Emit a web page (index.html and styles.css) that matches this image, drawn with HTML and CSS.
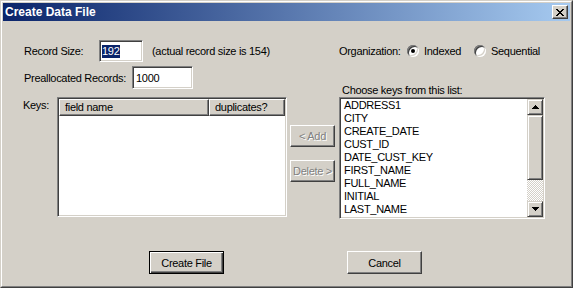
FILE: index.html
```html
<!DOCTYPE html>
<html lang="en">
<head>
<meta charset="UTF-8">
<meta name="viewport" content="width=device-width, initial-scale=1.0">
<title>Create Data File</title>
<link rel="stylesheet" href="styles.css">
</head>
<body>
<div class="window">
  <div class="window-inner">
    <div class="titlebar">
      <span class="title">Create Data File</span>
      <button type="button" class="close-btn">
        <svg width="8" height="7" viewBox="0 0 8 7" shape-rendering="crispEdges">
          <path fill="#000" d="M0 0h2v1h-2z M6 0h2v1h-2z M1 1h2v1h-2z M5 1h2v1h-2z M2 2h4v1h-4z M3 3h2v1h-2z M2 4h4v1h-4z M1 5h2v1h-2z M5 5h2v1h-2z M0 6h2v1h-2z M6 6h2v1h-2z"/>
        </svg>
      </button>
    </div>

    <div class="client">
      <div class="row-top">
        <div class="left-part">
          <span class="lbl lbl-size">Record Size:</span>
          <div class="field field-size"><span class="sel">192</span></div>
          <span class="note">(actual record size is 154)</span>
        </div>
        <div class="org">
          <span class="lbl lbl-org">Organization:</span>
          <span class="radio checked"></span><span class="radio-text first">Indexed</span>
          <span class="radio"></span><span class="radio-text">Sequential</span>
        </div>
      </div>

      <div class="main">
        <div class="left-col">
          <div class="row-prealloc">
            <span class="lbl lbl-prealloc">Preallocated Records:</span>
            <div class="field field-prealloc">1000</div>
          </div>
          <div class="keys-row">
            <span class="lbl lbl-keys">Keys:</span>
            <div class="listview">
              <div class="lv-header">
                <div class="lv-col col-name">field name</div>
                <div class="lv-col col-dup">duplicates?</div>
              </div>
            </div>
            <div class="move-btns">
              <button type="button" class="btn disabled btn-add">&lt; Add</button>
              <button type="button" class="btn disabled btn-del">Delete &gt;</button>
            </div>
          </div>
        </div>

        <div class="right-col">
          <div class="caption">Choose keys from this list:</div>
          <div class="listbox">
            <ul class="items">
              <li>ADDRESS1</li>
              <li>CITY</li>
              <li>CREATE_DATE</li>
              <li>CUST_ID</li>
              <li>DATE_CUST_KEY</li>
              <li>FIRST_NAME</li>
              <li>FULL_NAME</li>
              <li>INITIAL</li>
              <li>LAST_NAME</li>
              <li>REF_CODE</li>
            </ul>
            <div class="scrollbar">
              <div class="sb-btn">
                <svg width="7" height="4" viewBox="0 0 7 4" shape-rendering="crispEdges"><path d="M3 0h1v1h1v1h1v1h1v1h-7v-1h1v-1h1v-1h1z"/></svg>
              </div>
              <div class="sb-thumb"></div>
              <div class="sb-track"></div>
              <div class="sb-btn">
                <svg width="7" height="4" viewBox="0 0 7 4" shape-rendering="crispEdges"><path d="M0 0h7v1h-1v1h-1v1h-1v1h-1v-1h-1v-1h-1v-1h-1z"/></svg>
              </div>
            </div>
          </div>
        </div>
      </div>

      <div class="actions">
        <button type="button" class="btn big default">Create File</button>
        <button type="button" class="btn big">Cancel</button>
      </div>
    </div>
  </div>
</div>
</body>
</html>
```

FILE: styles.css
```css
body {
  margin: 0;
  font-family: "Liberation Sans", Arial, sans-serif;
  font-size: 11px;
  letter-spacing: -0.3px;
  color: #000;
  background-color: #D4D0C8;
}

/* window frame */
.window {
  width: 573px;
  height: 288px;
  box-sizing: border-box;
  border: 1px solid;
  border-color: #D4D0C8 #404040 #404040 #D4D0C8;
}

.window-inner {
  height: 100%;
  box-sizing: border-box;
  border: 1px solid;
  border-color: #fff #808080 #808080 #fff;
  padding: 1px;
}

.titlebar {
  height: 18px;
  display: flex;
  align-items: center;
  padding-left: 2px;
  background: linear-gradient(to right, #0A246A, #A6CAF0);
}

.title {
  color: white;
  font-weight: bold;
  font-size: 12px;
  letter-spacing: normal;
}

.close-btn {
  margin-left: auto;
  margin-right: 2px;
  width: 16px;
  height: 14px;
  padding: 0;
  box-sizing: border-box;
  display: flex;
  align-items: center;
  justify-content: center;
  background-color: #D4D0C8;
  border: 1px solid;
  border-color: #fff #404040 #404040 #fff;
  box-shadow: inset -1px -1px #808080;
}

.close-btn svg {
  display: block;
}

/* common pieces */
.lbl {
  white-space: nowrap;
  flex-shrink: 0;
}

.field {
  box-sizing: border-box;
  background: #fff;
  border: 1px solid;
  border-color: #808080 #fff #fff #808080;
  box-shadow: inset 1px 1px #404040, inset -1px -1px #D4D0C8;
  padding: 1px 1px 1px 2px;
  display: flex;
  align-items: center;
  flex-shrink: 0;
}

.sel {
  background-color: #0A246A;
  color: white;
  line-height: 13px;
  padding-right: 1px;
}

.btn {
  font-family: inherit;
  font-size: 11px;
  letter-spacing: inherit;
  color: #000;
  background-color: #D4D0C8;
  border: 1px solid;
  border-color: #fff #404040 #404040 #fff;
  box-shadow: inset -1px -1px #808080;
  padding: 0;
  box-sizing: border-box;
}

.btn.disabled {
  color: #808080;
  text-shadow: 1px 1px #fff;
}

.btn.default {
  border-color: #000;
  box-shadow: inset 1px 1px #fff, inset -1px -1px #404040, inset -2px -2px #808080;
}

/* first row */
.client {
  padding-top: 19px;
}

.row-top {
  display: flex;
  align-items: center;
  height: 22px;
  padding-left: 21px;
}

.left-part {
  width: 315px;
  display: flex;
  align-items: center;
}

.lbl-size {
  width: 75px;
}

.field-size {
  width: 44px;
  height: 22px;
}

.note {
  margin-left: 9px;
  white-space: nowrap;
}

.org {
  display: flex;
  align-items: center;
}

.lbl-org {
  width: 68px;
}

.radio {
  width: 12px;
  height: 12px;
  border-radius: 50%;
  background: #fff;
  box-shadow: inset 1px 1px #808080, inset -1px -1px #fff, inset 2px 2px #404040, inset -2px -2px #D4D0C8;
  position: relative;
  margin-right: 5px;
  flex-shrink: 0;
}

.radio.checked::after {
  content: "";
  position: absolute;
  left: 4px;
  top: 4px;
  width: 4px;
  height: 4px;
  border-radius: 50%;
  background: #000;
}

.radio-text.first {
  width: 50px;
}

/* middle area */
.main {
  display: flex;
  align-items: flex-start;
  margin-top: 4px;
  padding-left: 21px;
}

.left-col {
  width: 315px;
}

.row-prealloc {
  display: flex;
  align-items: center;
  height: 23px;
}

.lbl-prealloc {
  width: 108px;
}

.field-prealloc {
  width: 61px;
  height: 23px;
  padding-left: 3px;
}

.keys-row {
  display: flex;
  align-items: flex-start;
  margin-top: 8px;
}

.lbl-keys {
  margin-left: -2px;
  width: 27px;
  margin-right: 8px;
  text-align: right;
  padding-top: 2px;
}

.listview {
  width: 230px;
  height: 120px;
  box-sizing: border-box;
  background: #fff;
  border: 1px solid;
  border-color: #808080 #fff #fff #808080;
  box-shadow: inset 1px 1px #404040, inset -1px -1px #D4D0C8;
  padding: 1px;
}

.lv-header {
  display: flex;
  height: 17px;
}

.lv-col {
  box-sizing: border-box;
  height: 17px;
  line-height: 15px;
  padding-left: 5px;
  background: #D4D0C8;
  border: 1px solid;
  border-color: #fff #404040 #404040 #fff;
  box-shadow: inset -1px -1px #808080;
  white-space: nowrap;
}

.col-name {
  width: 150px;
}

.col-dup {
  width: 76px;
}

.move-btns {
  display: flex;
  flex-direction: column;
  margin-left: 3px;
}

.move-btns .btn {
  width: 45px;
  height: 22px;
}

.btn-add {
  margin-top: 28px;
}

.btn-del {
  margin-top: 13px;
}

/* key list on the right */
.right-col {
  width: 206px;
  margin-top: 18px;
}

.caption {
  line-height: 13px;
  padding-left: 3px;
}

.listbox {
  display: flex;
  width: 206px;
  height: 122px;
  box-sizing: border-box;
  background: #fff;
  border: 1px solid;
  border-color: #808080 #fff #fff #808080;
  box-shadow: inset 1px 1px #404040, inset -1px -1px #D4D0C8;
  padding: 1px;
}

.items {
  flex: 1;
  list-style: none;
  margin: 0;
  padding: 0 0 0 3px;
  overflow: hidden;
}

.items li {
  line-height: 13px;
  white-space: nowrap;
}

.scrollbar {
  width: 16px;
  display: flex;
  flex-direction: column;
}

.sb-btn, .sb-thumb {
  box-sizing: border-box;
  background: #D4D0C8;
  border: 1px solid;
  border-color: #D4D0C8 #404040 #404040 #D4D0C8;
  box-shadow: inset 1px 1px #fff, inset -1px -1px #808080;
}

.sb-btn {
  height: 16px;
  display: flex;
  align-items: center;
  justify-content: center;
}

.sb-btn svg {
  display: block;
}

.sb-thumb {
  height: 65px;
}

.sb-track {
  flex: 1;
  background: repeating-conic-gradient(#fff 0 25%, #D4D0C8 0 50%) 0 0 / 2px 2px;
}

/* bottom buttons */
.actions {
  display: flex;
  gap: 123px;
  margin-top: 32px;
  padding-left: 146px;
}

.btn.big {
  width: 75px;
  height: 23px;
}
```
